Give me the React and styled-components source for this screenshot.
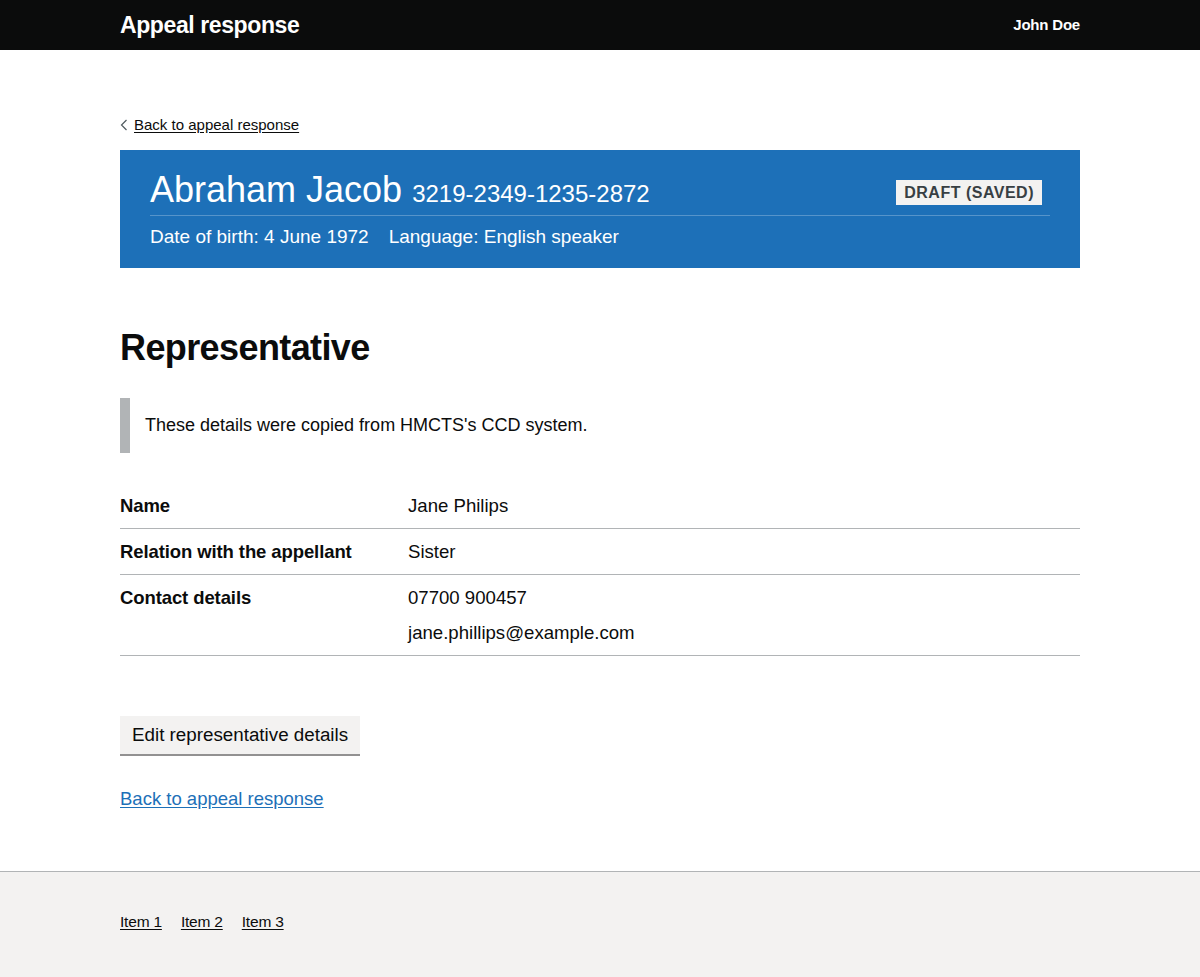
import React from "react"
import styled, { createGlobalStyle } from "styled-components"

const GlobalStyle = createGlobalStyle`
	html, body { margin: 0; padding: 0; background: #fff; }
	body {
		font-family: "Liberation Sans", Arial, sans-serif;
		color: #0b0c0c;
		-webkit-font-smoothing: antialiased;
	}
	* { box-sizing: border-box; }
`

const Header = styled.header`
	background: #0b0c0c;
	height: 50px;
	color: #fff;
`

const HeaderInner = styled.div`
	max-width: 960px;
	margin: 0 auto;
	height: 100%;
	display: flex;
	align-items: center;
	justify-content: space-between;
`

const ServiceName = styled.a`
	color: #fff;
	font-weight: 700;
	font-size: 23px;
	letter-spacing: -0.4px;
	text-decoration: none;
`

const UserName = styled.span`
	font-weight: 700;
	font-size: 15px;
	letter-spacing: -0.2px;
	margin-bottom: 2px;
`

const Main = styled.main`
	max-width: 960px;
	margin: 0 auto;
	padding: 66px 0 61px;
`

const BackLink = styled.a`
	display: inline-flex;
	align-items: center;
	gap: 6px;
	font-size: 15px;
	color: #0b0c0c;
	text-decoration: underline;
	text-underline-offset: 2px;
	margin-bottom: 17px;

	svg { flex: none; }
`

const Banner = styled.section`
	background: #1d70b8;
	color: #fff;
	padding: 20px 30px 20px;
`

const BannerTop = styled.div`
	display: flex;
	align-items: center;
	justify-content: space-between;
	border-bottom: 1px solid #5694ca;
	padding-bottom: 1px;
`

const PersonName = styled.h1`
	margin: 0;
	font-weight: 400;
	font-size: 36px;
	line-height: 40px;

	span {
		font-size: 24px;
	}
`

const Tag = styled.strong`
	background: #f3f2f1;
	color: #383f43;
	font-size: 16px;
	font-weight: 700;
	line-height: 17px;
	letter-spacing: 0.5px;
	padding: 4px 8px 4px;
	margin-right: 8px;
	text-transform: uppercase;
`

const BannerMeta = styled.div`
	display: flex;
	gap: 20px;
	padding-top: 10px;
	font-size: 19px;
	line-height: 22px;
`

const Heading = styled.h2`
	margin: 60px 0 30px;
	font-size: 36px;
	line-height: 40px;
	font-weight: 700;
	letter-spacing: -0.6px;
`

const Inset = styled.div`
	border-left: 10px solid #b1b4b6;
	padding: 15px 15px;
	font-size: 18px;
	line-height: 25px;
	margin-bottom: 30px;
`

const SummaryList = styled.dl`
	margin: 0 0 60px;
`

const SummaryRow = styled.div`
	display: grid;
	grid-template-columns: 288px 1fr;
	border-bottom: 1px solid #b1b4b6;
	padding: 10px 0 10px;
`

const Key = styled.dt`
	font-weight: 700;
	font-size: 18.5px;
	line-height: 25px;
	letter-spacing: -0.1px;
`

const Value = styled.dd`
	margin: 0;
	font-size: 18.6px;
	line-height: 25px;

	p { margin: 0 0 10px; }
	p:last-child { margin-bottom: 0; }
`

const Button = styled.button`
	display: block;
	font-family: inherit;
	font-size: 18.8px;
	line-height: 1;
	color: #0b0c0c;
	background: #f3f2f1;
	border: 0;
	box-shadow: 0 2px 0 #929191;
	padding: 10px 12px 10px;
	height: 38px;
	margin-bottom: 34px;
	cursor: pointer;
`

const TextLink = styled.a`
	font-size: 18.5px;
	color: #1d70b8;
	text-decoration: underline;
	text-underline-offset: 2px;
`

const Footer = styled.footer`
	background: #f3f2f1;
	border-top: 1px solid #b1b4b6;
	height: 106px;
`

const FooterInner = styled.div`
	max-width: 960px;
	margin: 0 auto;
	padding-top: 41px;
	display: flex;
	gap: 19px;
`

const FooterLink = styled.a`
	font-size: 15.5px;
	color: #0b0c0c;
	text-decoration: underline;
	text-underline-offset: 2px;
	letter-spacing: -0.2px;
`

const rows = [
	{ key: "Name", values: ["Jane Philips"] },
	{ key: "Relation with the appellant", values: ["Sister"] },
	{ key: "Contact details", values: ["07700 900457", "jane.phillips@example.com"] },
]

const App = () => (
	<>
		<GlobalStyle />
		<Header>
			<HeaderInner>
				<ServiceName href="#">Appeal response</ServiceName>
				<UserName>John Doe</UserName>
			</HeaderInner>
		</Header>
		<Main>
			<BackLink href="#">
				<svg width="8" height="12" viewBox="0 0 8 12">
					<path d="M6.5 1 L1.5 6 L6.5 11" fill="none" stroke="#505a5f" strokeWidth="1.2" />
				</svg>
				Back to appeal response
			</BackLink>
			<Banner>
				<BannerTop>
					<PersonName>Abraham Jacob <span>3219-2349-1235-2872</span></PersonName>
					<Tag>Draft (saved)</Tag>
				</BannerTop>
				<BannerMeta>
					<span>Date of birth: 4 June 1972</span>
					<span>Language: English speaker</span>
				</BannerMeta>
			</Banner>
			<Heading>Representative</Heading>
			<Inset>These details were copied from HMCTS's CCD system.</Inset>
			<SummaryList>
				{rows.map(row => (
					<SummaryRow key={row.key}>
						<Key>{row.key}</Key>
						<Value>
							{row.values.map(v => <p key={v}>{v}</p>)}
						</Value>
					</SummaryRow>
				))}
			</SummaryList>
			<Button type="button">Edit representative details</Button>
			<TextLink href="#">Back to appeal response</TextLink>
		</Main>
		<Footer>
			<FooterInner>
				<FooterLink href="#">Item 1</FooterLink>
				<FooterLink href="#">Item 2</FooterLink>
				<FooterLink href="#">Item 3</FooterLink>
			</FooterInner>
		</Footer>
	</>
)

export default App
